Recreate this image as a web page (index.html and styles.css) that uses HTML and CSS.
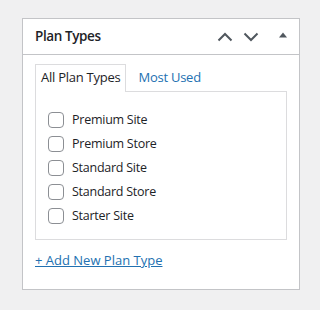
FILE: index.html
```html
<!DOCTYPE html>
<html lang="en">
<head>
    <meta charset="UTF-8">
    <title>Plan Types</title>
    <link rel="stylesheet" href="styles.css">
</head>
<body>
    <div class="postbox">
        <div class="postbox-header">
            <h2 class="hndle">Plan Types</h2>
            <div class="handle-actions">
                <button class="handle-btn" aria-label="Move up">
                    <svg width="16" height="10" viewBox="0 0 16 10"><path d="M1.5 8.5 L8 2 L14.5 8.5" fill="none" stroke="#50575e" stroke-width="2"/></svg>
                </button>
                <button class="handle-btn" aria-label="Move down">
                    <svg width="16" height="10" viewBox="0 0 16 10"><path d="M1.5 1.5 L8 8 L14.5 1.5" fill="none" stroke="#50575e" stroke-width="2"/></svg>
                </button>
                <button class="handle-btn toggle" aria-label="Toggle panel">
                    <svg width="10" height="6" viewBox="0 0 10 6"><path d="M1 5.5 L5 0.5 L9 5.5 Z" fill="#50575e"/></svg>
                </button>
            </div>
        </div>
        <div class="inside">
            <ul class="tabs">
                <li class="tab active">All Plan Types</li>
                <li class="tab"><a href="#">Most Used</a></li>
            </ul>
            <div class="tabs-panel">
                <label class="item"><input type="checkbox" class="check"> Premium Site</label>
                <label class="item"><input type="checkbox" class="check"> Premium Store</label>
                <label class="item"><input type="checkbox" class="check"> Standard Site</label>
                <label class="item"><input type="checkbox" class="check"> Standard Store</label>
                <label class="item"><input type="checkbox" class="check"> Starter Site</label>
            </div>
            <p class="add-new"><a href="#">+ Add New Plan Type</a></p>
        </div>
    </div>
</body>
</html>
```

FILE: styles.css
```css
body {
    margin: 0;
    padding: 18px 0 0 22px;
    background-color: #f0f0f1;
    font-family: "Segoe UI", "Open Sans", sans-serif;
    font-size: 13px;
    color: #1d2327;
}

.postbox {
    width: 276px;
    height: 270px;
    border: 1px solid #c3c4c7;
    background-color: #fff;
}

.postbox-header {
    display: flex;
    align-items: center;
    justify-content: space-between;
    height: 35px;
    border-bottom: 1px solid #c3c4c7;
}

.hndle {
    margin: 0;
    padding-left: 12px;
    font-size: 13.5px;
    font-weight: 600;
    letter-spacing: -0.4px;
    line-height: 1.4;
}

.handle-actions {
    display: flex;
    align-items: center;
}

.handle-btn {
    display: flex;
    align-items: center;
    justify-content: center;
    width: 26px;
    height: 35px;
    padding: 0;
    border: none;
    background: none;
    cursor: pointer;
}

.handle-btn.toggle {
    width: 32px;
    margin-left: 3px;
    padding-bottom: 3px;
}

.inside {
    padding: 9px 12px 0 12px;
}

.tabs {
    display: flex;
    gap: 6px;
    margin: 0;
    padding: 0;
    list-style: none;
    letter-spacing: -0.25px;
}

.tab {
    margin-bottom: -1px;
    padding: 3px 5px 5px;
    line-height: 19px;
    border: 1px solid transparent;
    border-bottom: none;
}

.tab.active {
    position: relative;
    z-index: 1;
    border-color: #dcdcde;
    background-color: #fff;
}

.tab a {
    color: #2271b1;
    text-decoration: none;
}

.tabs-panel {
    display: flex;
    flex-direction: column;
    gap: 6px;
    height: 128px;
    padding: 19px 12px 0;
    border: 1px solid #dcdcde;
}

.item {
    display: flex;
    align-items: center;
    gap: 8px;
    line-height: 18px;
    font-size: 12.5px;
    letter-spacing: -0.25px;
}

.check {
    appearance: none;
    width: 16px;
    height: 16px;
    margin: 0;
    border: 1px solid #8c8f94;
    border-radius: 4px;
    background-color: #fff;
}

.add-new {
    margin: 11px 0 0;
}

.add-new a {
    color: #2271b1;
}
```
